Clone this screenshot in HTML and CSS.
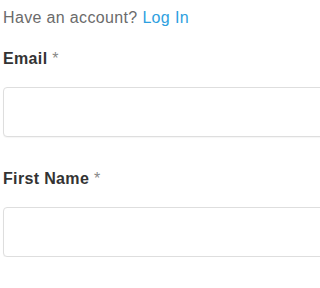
FILE: index.html
```html
<!DOCTYPE html>
<html>
<head>
<meta charset="utf-8">
<link rel="stylesheet" href="styles.css">
</head>
<body>
<form class="signup">
  <p class="have-account">Have an account? <a class="login-link" href="#">Log In</a></p>
  <div class="field field-email">
    <label class="field-label">Email <span class="req">*</span></label>
    <input class="field-input" type="email">
  </div>
  <div class="field field-first">
    <label class="field-label">First Name <span class="req">*</span></label>
    <input class="field-input" type="text">
  </div>
</form>
</body>
</html>
```
FILE: styles.css
```css
html, body {
  margin: 0;
  padding: 0;
  background: #ffffff;
  overflow: hidden;
}
.signup {
  box-sizing: border-box;
  width: 100%;
  overflow: hidden;
  padding: 8px 0 0 3px;
  font-family: "Liberation Sans", Arial, sans-serif;
  font-size: 16px;
  line-height: 20px;
  letter-spacing: 0.35px;
  display: flex;
  flex-direction: column;
}
.have-account {
  margin: 0;
  color: #6b6b6b;
}
.login-link {
  color: #2d9fe0;
  text-decoration: none;
}
.field {
  display: flex;
  flex-direction: column;
  gap: 18px;
}
.field-email {
  margin-top: 21px;
}
.field-first {
  margin-top: 32px;
}
.field-label {
  font-weight: bold;
  color: #333333;
}
.req {
  font-weight: normal;
  color: #888888;
}
.field-input {
  box-sizing: border-box;
  height: 50px;
  width: calc(100% + 10px);
  margin: 0;
  border: 1px solid #dedede;
  border-radius: 4px;
  background: #ffffff;
  box-shadow: 0 1px 1px rgba(0,0,0,0.04);
}
```
